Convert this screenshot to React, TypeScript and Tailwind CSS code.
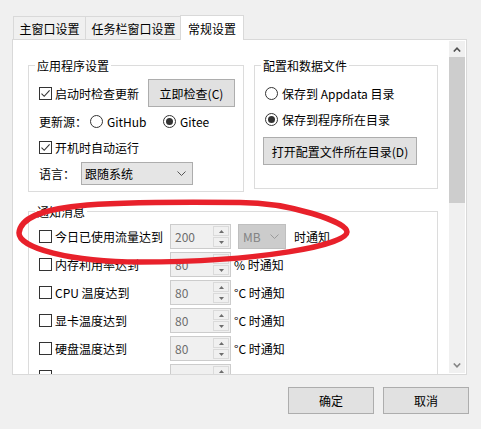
import React from "react";

function Check({ checked }: { checked?: boolean }) {
  return (
    <span className="w-[13px] h-[13px] border border-[#333333] bg-white flex items-center justify-center shrink-0">
      {checked && (
        <svg width="11" height="11" viewBox="0 0 11 11">
          <path d="M1.5 5.6 L4.2 8.3 L9.6 2.3" stroke="#333333" strokeWidth="1.1" fill="none" />
        </svg>
      )}
    </span>
  );
}

function Radio({ checked }: { checked?: boolean }) {
  return (
    <span className="w-[13px] h-[13px] rounded-full border border-[#333333] bg-white flex items-center justify-center shrink-0">
      {checked && <span className="w-[7px] h-[7px] rounded-full bg-[#333333]" />}
    </span>
  );
}

function Chevron({ color }: { color: string }) {
  return (
    <svg width="9" height="5" viewBox="0 0 9 5">
      <path d="M0.5 0.5 L4.5 4.5 L8.5 0.5" stroke={color} strokeWidth="1" fill="none" />
    </svg>
  );
}

function Spin({ value }: { value: string }) {
  return (
    <div className="w-[61px] h-[25px] border border-[#cccccc] bg-[#f0f0f0] flex shrink-0">
      <span className="flex-1 pl-[4px] text-[#6d6d6d] leading-[23px]">{value}</span>
      <div className="w-[16px] my-[1px] mr-[1px] flex flex-col gap-[1px]">
        <span className="flex-1 border border-[#dadada] flex items-center justify-center">
          <svg width="5" height="3" viewBox="0 0 5 3">
            <path d="M0 3 L2.5 0 L5 3 Z" fill="#6d6d6d" />
          </svg>
        </span>
        <span className="flex-1 border border-[#dadada] flex items-center justify-center">
          <svg width="5" height="3" viewBox="0 0 5 3">
            <path d="M0 0 L2.5 3 L5 0 Z" fill="#6d6d6d" />
          </svg>
        </span>
      </div>
    </div>
  );
}

function NotifyRow({ label, value, unit }: { label: string; value: string; unit: string }) {
  return (
    <div className="h-[25px] flex items-center">
      <div className="w-[131px] flex items-center">
        <Check />
        <span className="ml-[3px] whitespace-nowrap">{label}</span>
      </div>
      <Spin value={value} />
      <span className="ml-[3px] whitespace-nowrap">{unit}</span>
    </div>
  );
}

export default function App() {
  return (
    <div className="relative w-[481px] h-[429px] bg-[#f0f0f0] overflow-hidden font-['Noto_Sans_CJK_SC',sans-serif] text-[12px] text-black leading-[17px]">
      {/* tabs */}
      <div className="flex items-end h-[39px] pl-[13px]">
        <div className="w-[73px] h-[23px] border border-b-0 border-[#d9d9d9] flex items-center justify-center">
          主窗口设置
        </div>
        <div className="w-[96px] h-[23px] border border-l-0 border-b-0 border-[#d9d9d9] flex items-center justify-center">
          任务栏窗口设置
        </div>
        <div className="relative z-10 -ml-[2px] -mb-[1px] w-[64px] h-[25px] border border-b-0 border-[#d9d9d9] bg-white flex items-center justify-center">
          常规设置
        </div>
      </div>

      {/* panel */}
      <div className="ml-[12px] w-[455px] h-[336px] bg-white border border-[#d9d9d9] flex">
        <div className="flex-1 overflow-hidden pl-[15px] pt-[17px]">
          <div className="flex gap-[10px] items-start">
            <fieldset className="w-[216px] border border-[#dcdcdc] px-[6px] pb-[6px]">
              <legend className="px-[2px] leading-[17px]">应用程序设置</legend>
              <div className="pl-[4px] flex flex-col">
                <div className="mt-[5px] h-[28px] flex items-center">
                  <Check checked />
                  <span className="ml-[3px]">启动时检查更新</span>
                  <div className="ml-auto mr-[2px] w-[87px] h-[28px] bg-[#e1e1e1] border border-[#adadad] flex items-center justify-center">
                    立即检查(C)
                  </div>
                </div>
                <div className="mt-[2px] h-[24px] flex items-center">
                  <span className="w-[51px]">更新源：</span>
                  <div className="w-[73px] flex items-center">
                    <Radio />
                    <span className="ml-[4px]">GitHub</span>
                  </div>
                  <Radio checked />
                  <span className="ml-[4px]">Gitee</span>
                </div>
                <div className="mt-[2px] h-[24px] flex items-center">
                  <Check checked />
                  <span className="ml-[3px]">开机时自动运行</span>
                </div>
                <div className="mt-[3px] h-[23px] flex items-center">
                  <span className="w-[42px]">语言：</span>
                  <div className="w-[112px] h-[23px] bg-[#e5e5e5] border border-[#adadad] flex items-center justify-between pl-[3px] pr-[6px]">
                    <span>跟随系统</span>
                    <Chevron color="#555555" />
                  </div>
                </div>
              </div>
            </fieldset>

            <fieldset className="w-[184px] border border-[#dcdcdc] px-[6px] pb-[23px]">
              <legend className="px-[2px] leading-[17px]">配置和数据文件</legend>
              <div className="pl-[4px] flex flex-col">
                <div className="mt-[7px] h-[24px] flex items-center">
                  <Radio />
                  <span className="ml-[4px]">保存到 Appdata 目录</span>
                </div>
                <div className="mt-[2px] h-[24px] flex items-center">
                  <Radio checked />
                  <span className="ml-[4px]">保存到程序所在目录</span>
                </div>
                <div className="mt-[6px] -ml-[2px] w-[154px] h-[28px] bg-[#e1e1e1] border border-[#adadad] flex items-center justify-center whitespace-nowrap">
                  打开配置文件所在目录(D)
                </div>
              </div>
            </fieldset>
          </div>

          <fieldset className="mt-[11px] w-[410px] border border-[#dcdcdc] px-[6px] pb-[6px]">
            <legend className="px-[2px] leading-[17px]">通知消息</legend>
            <div className="pl-[4px] flex flex-col gap-[3px] mt-[4px]">
              <div className="h-[25px] flex items-center">
                <div className="w-[131px] flex items-center">
                  <Check />
                  <span className="ml-[3px] whitespace-nowrap">今日已使用流量达到</span>
                </div>
                <Spin value="200" />
                <div className="ml-[7px] w-[48px] h-[25px] bg-[#cccccc] border border-[#bfbfbf] flex items-center justify-between pl-[4px] pr-[6px]">
                  <span className="text-[#838383]">MB</span>
                  <Chevron color="#9a9a9a" />
                </div>
                <span className="ml-[8px]">时通知</span>
              </div>
              <NotifyRow label="内存利用率达到" value="80" unit="% 时通知" />
              <NotifyRow label="CPU 温度达到" value="80" unit="°C 时通知" />
              <NotifyRow label="显卡温度达到" value="80" unit="°C 时通知" />
              <NotifyRow label="硬盘温度达到" value="80" unit="°C 时通知" />
              <div className="h-[25px] flex items-center">
                <div className="w-[131px] flex items-center">
                  <Check />
                </div>
                <Spin value="" />
              </div>
            </div>
          </fieldset>
        </div>

        {/* scrollbar */}
        <div className="w-[17px] py-[1px] pr-[1px] flex">
          <div className="w-[16px] bg-[#f0f0f0] flex flex-col">
            <div className="h-[16px] flex items-center justify-center">
              <svg width="8" height="5" viewBox="0 0 8 5">
                <path d="M0.8 4.5 L4 1.2 L7.2 4.5" stroke="#505050" strokeWidth="1.6" fill="none" />
              </svg>
            </div>
            <div className="h-[146px] bg-[#cdcdcd]" />
            <div className="flex-1" />
            <div className="h-[16px] flex items-center justify-center">
              <svg width="8" height="5" viewBox="0 0 8 5">
                <path d="M0.8 0.5 L4 3.8 L7.2 0.5" stroke="#858585" strokeWidth="1.6" fill="none" />
              </svg>
            </div>
          </div>
        </div>
      </div>

      {/* bottom buttons */}
      <div className="flex justify-end gap-[9px] pr-[12px] mt-[12px]">
        <div className="w-[86px] h-[27px] bg-[#e1e1e1] border border-[#adadad] flex items-center justify-center">确定</div>
        <div className="w-[86px] h-[27px] bg-[#e1e1e1] border border-[#adadad] flex items-center justify-center">取消</div>
      </div>

      {/* red hand-drawn ellipse annotation */}
      <svg className="absolute left-0 top-0 pointer-events-none" width="481" height="429" viewBox="0 0 481 429">
        <path
          d="M 19 233 C 22 203, 100 201, 240 202.5 C 290 202.5, 347 222, 347 232 C 347 245, 260 262, 140 262 C 70 262, 19 248, 19 233 Z"
          stroke="#e8212b"
          strokeWidth="5.5"
          fill="none"
        />
      </svg>
    </div>
  );
}
